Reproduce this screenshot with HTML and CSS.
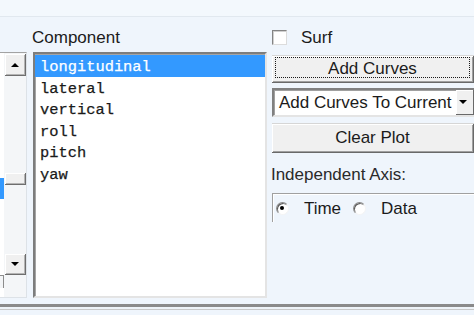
FILE: index.html
```html
<!DOCTYPE html>
<html lang="en">
<head>
    <meta charset="UTF-8">
    <title>Plot Curves</title>
    <link rel="stylesheet" href="styles.css">
</head>
<body>
    <div class="topbar"></div>

    <div class="main">
        <!-- liste de gauche (coupée) -->
        <div class="side">
            <div class="side-list">
                <div class="side-item"></div>
                <div class="hscroll-end"></div>
            </div>
            <div class="vscroll">
                <div class="sbtn"><span class="tri-up"></span></div>
                <div class="track"><div class="thumb"></div></div>
                <div class="sbtn"><span class="tri-down"></span></div>
                <div class="corner"></div>
            </div>
        </div>

        <div class="component">
            <div class="label">Component</div>
            <ul class="listbox">
                <li class="selected">longitudinal</li>
                <li>lateral</li>
                <li>vertical</li>
                <li>roll</li>
                <li>pitch</li>
                <li>yaw</li>
            </ul>
        </div>

        <div class="controls">
            <label class="check-row">
                <span class="checkbox"></span>
                <span class="check-text">Surf</span>
            </label>
            <button class="btn focused" type="button">Add Curves</button>
            <div class="combo">
                <span class="combo-text">Add Curves To Current</span>
                <span class="combo-btn"><span class="tri-down"></span></span>
            </div>
            <button class="btn clear" type="button">Clear Plot</button>
            <div class="label axis-label">Independent Axis:</div>
            <div class="group">
                <span class="radio checked"></span>
                <span class="radio-text">Time</span>
                <span class="radio second"></span>
                <span class="radio-text">Data</span>
            </div>
        </div>
    </div>

    <div class="separator"></div>
</body>
</html>
```

FILE: styles.css
```css
/* Base */
* {
    margin: 0;
    padding: 0;
    box-sizing: border-box;
}

body {
    width: 474px;
    height: 315px;
    overflow: hidden;
    background: #eff5fc;
    font-family: 'Liberation Sans', Arial, sans-serif;
    font-size: 17px;
    color: #1b1b1b;
}

.topbar {
    height: 17px;
    background: #f3f8fd;
    border-bottom: 1px solid #e1e8ef;
}

.main {
    display: flex;
    height: 281px;
}

/* Liste de gauche */
.side {
    display: flex;
    width: 27px;
    height: 246px;
    margin-top: 35px;
    border-top: 1px solid #a3a3a3;
    border-right: 1px solid #dde2e7;
    border-bottom: 1px solid #dde2e7;
}

.side-list {
    width: 4px;
    background: #ffffff;
    padding-top: 125px;
    display: flex;
    flex-direction: column;
}

.side-item {
    height: 21px;
    background: #3399ff;
}

.hscroll-end {
    width: 4px;
    height: 13px;
    margin-top: 76px;
    border-top: 1px solid #8c8c8c;
    border-right: 1px solid #8c8c8c;
    background: #f3f5f7;
}

.vscroll {
    width: 22px;
    padding: 1px 0 0 1px;
    background: #f4f6f8;
    display: flex;
    flex-direction: column;
}

.sbtn {
    height: 22px;
    background: #f0f0f0;
    border-right: 1px solid #6e6e6e;
    border-bottom: 1px solid #6e6e6e;
    box-shadow: inset 1px 1px #ffffff, inset -1px -1px #b4b4b4;
    display: flex;
    align-items: center;
    justify-content: center;
}

.sbtn + .track + .sbtn {
    height: 21px;
}

.track {
    height: 178px;
}

.thumb {
    height: 12px;
    margin-top: 97px;
    background: #f0f0f0;
    border-right: 1px solid #6e6e6e;
    border-bottom: 1px solid #6e6e6e;
    box-shadow: inset 1px 1px #ffffff, inset -1px -1px #b4b4b4;
}

.corner {
    height: 22px;
}

.tri-up,
.tri-down {
    width: 0;
    height: 0;
    border-left: 4px solid transparent;
    border-right: 4px solid transparent;
}

.tri-up {
    border-bottom: 4px solid #000;
}

.tri-down {
    border-top: 4px solid #000;
}

/* Composante */
.component {
    width: 235px;
    margin-left: 6px;
}

.label {
    height: 20px;
    line-height: 20px;
    margin-top: 11px;
    margin-left: -1px;
}

.listbox {
    list-style: none;
    height: 246px;
    margin-top: 4px;
    background: #ffffff;
    border-style: solid;
    border-width: 2px;
    border-color: #7d7d7d #e4e4e4 #e4e4e4 #7d7d7d;
    box-shadow: inset 1px 1px #a5a5a5;
    padding-top: 1px;
    font-family: 'Liberation Mono', 'Courier New', monospace;
    font-size: 15.4px;
    color: #1a1a1a;
}

.listbox li {
    height: 21.6px;
    line-height: 21.6px;
    padding: 2px 0 0 5px;
    -webkit-text-stroke: 0.25px #1a1a1a;
}

.listbox li.selected {
    height: 21.6px;
    background: #3399ff;
    color: #ffffff;
    -webkit-text-stroke: 0.25px #ffffff;
}

/* Contrôles */
.controls {
    width: 203px;
    margin-left: 5px;
    display: flex;
    flex-direction: column;
}

.check-row {
    display: flex;
    align-items: center;
    height: 20px;
    margin-top: 11px;
}

.checkbox {
    width: 15px;
    height: 15px;
    margin-top: -1px;
    background: #ffffff;
    border-style: solid;
    border-width: 1px;
    border-color: #848484 #dcdcdc #dcdcdc #848484;
    box-shadow: inset 1px 1px #d0d0d0;
}

.check-text {
    margin-left: 14px;
}

.btn {
    position: relative;
    width: 100%;
    font: inherit;
    color: #1b1b1b;
    background: #f0f0f0;
    border: none;
    border-right: 1px solid #696969;
    border-bottom: 1px solid #696969;
    box-shadow: inset 1px 1px #ffffff, inset -1px -1px #a0a0a0, 0 -1px #d6d6d6;
    padding-bottom: 1px;
}

.btn.focused {
    height: 27px;
    margin-top: 8px;
}

.btn.focused::after {
    content: '';
    position: absolute;
    top: 1px;
    left: 3px;
    right: 3px;
    bottom: 4px;
    border: 1px dotted #1b1b1b;
}

.btn.clear {
    height: 29px;
    margin-top: 7px;
}

.combo {
    display: flex;
    height: 29px;
    margin-top: 5px;
    background: #ffffff;
    border-style: solid;
    border-width: 2px 0 2px 2px;
    border-color: #808080 #e4e4e4 #e4e4e4 #808080;
    box-shadow: inset 1px 1px #a0a0a0;
}

.combo-text {
    flex: 1;
    padding: 3px 0 0 5px;
    line-height: 20px;
    white-space: nowrap;
    overflow: hidden;
}

.combo-btn {
    width: 18px;
    background: #f0f0f0;
    border-right: 1px solid #696969;
    border-bottom: 1px solid #696969;
    box-shadow: inset 1px 1px #ffffff;
    display: flex;
    align-items: center;
    justify-content: center;
    padding-right: 4px;
}

.axis-label {
    margin-top: 12px;
    color: #2a2a2a;
}

/* Axe indépendant */
.group {
    display: flex;
    align-items: center;
    height: 29px;
    margin-top: 8px;
    padding-left: 3px;
    border-top: 1px solid #a0a0a0;
    border-left: 1px solid #a0a0a0;
    box-shadow: inset 1px 1px #ffffff;
}

.radio {
    width: 13px;
    height: 13px;
    border-radius: 50%;
    background: #ffffff;
    border-style: solid;
    border-width: 1px;
    border-color: #8a8a8a #f4f4f4 #f4f4f4 #8a8a8a;
    box-shadow: inset 1px 1px #5a5a5a;
    display: flex;
    align-items: center;
    justify-content: center;
}

.radio.checked::after {
    content: '';
    width: 4px;
    height: 4px;
    border-radius: 50%;
    background: #000;
}

.radio.second {
    margin-left: 12px;
}

.radio-text {
    margin-left: 15px;
    line-height: 20px;
    padding-top: 2px;
}

/* Séparateur du bas */
.separator {
    height: 3px;
    margin-top: 6px;
    background: #8a8a8a;
    box-shadow: 0 2px #eef3f8, 0 3px #c8c8c8;
}
```
